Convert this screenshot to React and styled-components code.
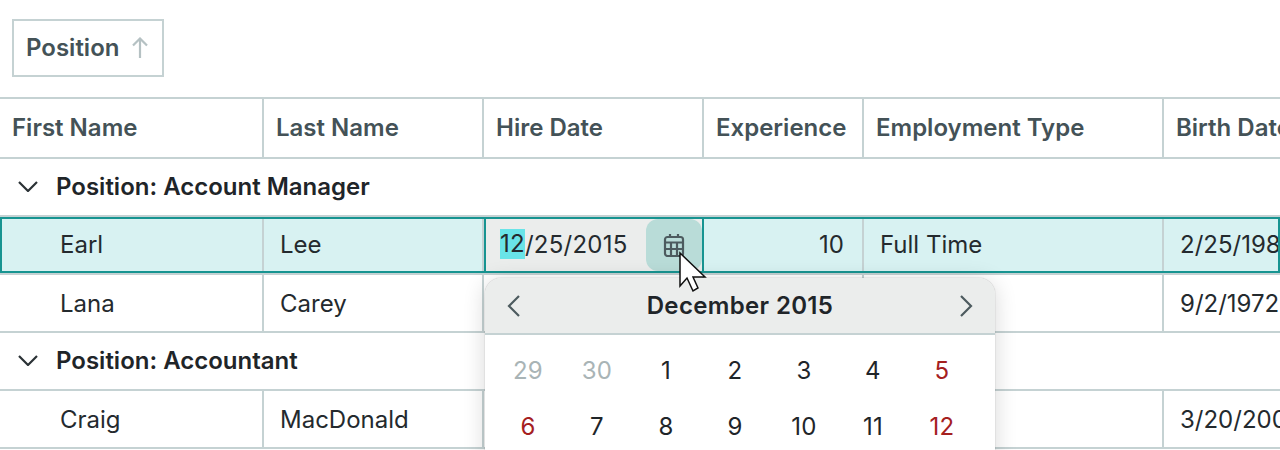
import React from "react";
import styled, { createGlobalStyle } from "styled-components";

const GlobalStyle = createGlobalStyle`
  html, body {
    margin: 0;
    padding: 0;
    width: 1280px;
    height: 450px;
    overflow: hidden;
    background: #fff;
    font-family: Inter, "Liberation Sans", sans-serif;
  }
`;

const COLUMNS = "264px 220px 220px 160px 300px 300px";
const LINE = "#c5d2d3";
const TEAL = "#179491";

const Page = styled.div`
  position: relative;
  width: 1280px;
  height: 450px;
  overflow: hidden;
`;

const GroupPanel = styled.div`
  display: flex;
  align-items: flex-start;
  height: 97px;
  padding: 19px 0 0 12px;
  box-sizing: border-box;
`;

const GroupChip = styled.div`
  display: flex;
  align-items: center;
  gap: 13px;
  height: 58px;
  width: 152px;
  padding: 0 0 2px 12px;
  box-sizing: border-box;
  border: 2px solid ${LINE};
  font-size: 24px;
  font-weight: 600;
  color: #445257;
`;

const Row = styled.div`
  display: grid;
  grid-template-columns: ${COLUMNS};
  height: 58px;
  box-sizing: border-box;
  border-bottom: 2px solid ${LINE};
`;

const HeaderRow = styled(Row)`
  border-top: 2px solid ${LINE};
  height: 62px;
`;

const HeaderCell = styled.div`
  display: flex;
  align-items: center;
  padding: 0 0 2px 12px;
  border-right: 2px solid ${LINE};
  font-size: 24px;
  font-weight: 600;
  color: #445257;
  white-space: nowrap;
  overflow: hidden;
`;

const Cell = styled.div`
  display: flex;
  align-items: center;
  justify-content: ${(p) => (p.$right ? "flex-end" : "flex-start")};
  padding: 0 ${(p) => (p.$right ? "18px" : "0")} 0 ${(p) => p.$indent || 16}px;
  border-right: 2px solid ${LINE};
  font-size: 24px;
  color: #242a2e;
  white-space: nowrap;
  overflow: hidden;
`;

const SelectedRow = styled(Row)`
  position: relative;
  background: #d8f2f2;
  ${Cell} {
    padding-bottom: 2px;
  }
  &::after {
    content: "";
    position: absolute;
    inset: 0;
    border: 2px solid ${TEAL};
    pointer-events: none;
  }
`;

const GroupRow = styled.div`
  display: flex;
  align-items: center;
  gap: 18px;
  height: 58px;
  padding: 0 0 2px 18px;
  box-sizing: border-box;
  border-bottom: 2px solid ${LINE};
  font-size: 24px;
  font-weight: 600;
  color: #1f2529;
`;

const DateEditor = styled.div`
  display: flex;
  align-items: stretch;
  background: #ebedec;
  border: 2px solid ${TEAL};
  font-size: 24px;
  letter-spacing: 0.25px;
  color: #242a2e;
`;

const DateText = styled.div`
  flex: 1;
  display: flex;
  align-items: center;
  padding: 0 0 2px 14px;
`;

const DatePart = styled.span`
  background: #69e4e8;
  line-height: 30px;
`;

const CalendarButton = styled.div`
  display: flex;
  align-items: center;
  justify-content: center;
  width: 56px;
  background: #b9dcd8;
  border-radius: 12px;
  color: #4d5b5f;
`;

const CalendarIcon = styled.svg`
  width: 22px;
  height: 24px;
  fill: none;
  stroke: currentColor;
  stroke-width: 2.2;
`;

const Popup = styled.div`
  position: absolute;
  left: 485px;
  top: 278px;
  width: 510px;
  height: 240px;
  background: #fff;
  border-radius: 16px 16px 0 0;
  box-shadow: 0 0 1px rgba(0, 0, 0, 0.45), 0 3px 22px rgba(0, 0, 0, 0.16);
  overflow: hidden;
`;

const PopupHeader = styled.div`
  display: flex;
  align-items: center;
  justify-content: space-between;
  height: 57px;
  padding: 0 18px;
  box-sizing: border-box;
  background: #ebedec;
  border-bottom: 2px solid ${LINE};
`;

const MonthTitle = styled.div`
  font-size: 24px;
  font-weight: 600;
  letter-spacing: 0.35px;
  color: #1f2529;
`;

const NavIcon = styled.svg`
  width: 22px;
  height: 24px;
  fill: none;
  stroke: #4d5b5f;
  stroke-width: 2.2;
`;

const Weeks = styled.div`
  padding: 7px 0 0 8.5px;
`;

const Week = styled.div`
  display: grid;
  grid-template-columns: repeat(7, 69px);
  height: 56px;
  align-items: center;
`;

const Day = styled.div`
  text-align: center;
  font-size: 24px;
  letter-spacing: 0.3px;
  color: ${(p) => (p.$muted ? "#a9b4b6" : p.$weekend ? "#a5201f" : "#1f2529")};
`;

const Cursor = styled.svg`
  position: absolute;
  left: 678px;
  top: 251px;
  width: 30px;
  height: 43px;
`;

const Chevron = styled.svg`
  width: 20px;
  height: 11px;
  fill: none;
  stroke: #2b3236;
  stroke-width: 2.2;
`;

const ArrowUp = styled.svg`
  width: 16px;
  height: 21px;
  fill: none;
  stroke: #b5c1c3;
  stroke-width: 2.2;
`;

const HEADERS = ["First Name", "Last Name", "Hire Date", "Experience", "Employment Type", "Birth Date"];

const WEEKS = [
  [[29, "m"], [30, "m"], [1], [2], [3], [4], [5, "w"]],
  [[6, "w"], [7], [8], [9], [10], [11], [12, "w"]],
];

const GroupTitle = ({ children }) => (
  <GroupRow>
    <Chevron viewBox="0 0 20 11">
      <path d="M1 1 L10 10 L19 1" />
    </Chevron>
    {children}
  </GroupRow>
);

const DataRow = ({ first, last, birth }) => (
  <Row>
    <Cell $indent={60}>{first}</Cell>
    <Cell>{last}</Cell>
    <Cell />
    <Cell />
    <Cell />
    <Cell>{birth}</Cell>
  </Row>
);

const App = () => (
  <Page>
    <GlobalStyle />
    <GroupPanel>
      <GroupChip>
        Position
        <ArrowUp viewBox="0 0 16 21">
          <path d="M8 21 V1.5 M1 8.5 L8 1.5 L15 8.5" />
        </ArrowUp>
      </GroupChip>
    </GroupPanel>

    <HeaderRow>
      {HEADERS.map((h) => (
        <HeaderCell key={h}>{h}</HeaderCell>
      ))}
    </HeaderRow>

    <GroupTitle>Position: Account Manager</GroupTitle>

    <SelectedRow>
      <Cell $indent={60}>Earl</Cell>
      <Cell>Lee</Cell>
      <DateEditor>
        <DateText>
          <DatePart>12</DatePart>/25/2015
        </DateText>
        <CalendarButton>
          <CalendarIcon viewBox="0 0 22 24">
            <rect x="2" y="4" width="18" height="19" rx="2.5" />
            <path d="M2 9.5 H20 M2 16 H20 M8 9.5 V23 M14 9.5 V23 M7 1 V5 M15 1 V5" />
          </CalendarIcon>
        </CalendarButton>
      </DateEditor>
      <Cell $right>10</Cell>
      <Cell>Full Time</Cell>
      <Cell>2/25/1985</Cell>
    </SelectedRow>

    <DataRow first="Lana" last="Carey" birth="9/2/1972" />
    <GroupTitle>Position: Accountant</GroupTitle>
    <DataRow first="Craig" last="MacDonald" birth="3/20/2000" />

    <Popup>
      <PopupHeader>
        <NavIcon viewBox="0 0 22 24">
          <path d="M16 2 L6 12 L16 22" />
        </NavIcon>
        <MonthTitle>December 2015</MonthTitle>
        <NavIcon viewBox="0 0 22 24">
          <path d="M6 2 L16 12 L6 22" />
        </NavIcon>
      </PopupHeader>
      <Weeks>
        {WEEKS.map((week) => (
          <Week key={week[0][0]}>
            {week.map(([n, kind]) => (
              <Day key={n} $muted={kind === "m"} $weekend={kind === "w"}>
                {n}
              </Day>
            ))}
          </Week>
        ))}
      </Weeks>
    </Popup>

    <Cursor viewBox="0 0 30 43">
      <path d="M2 2 V35 L9 27 L15 40 L20 37 L15 26 L27 26 Z" fill="#fff" stroke="#111" strokeWidth="1.5" />
    </Cursor>
  </Page>
);

export default App;
